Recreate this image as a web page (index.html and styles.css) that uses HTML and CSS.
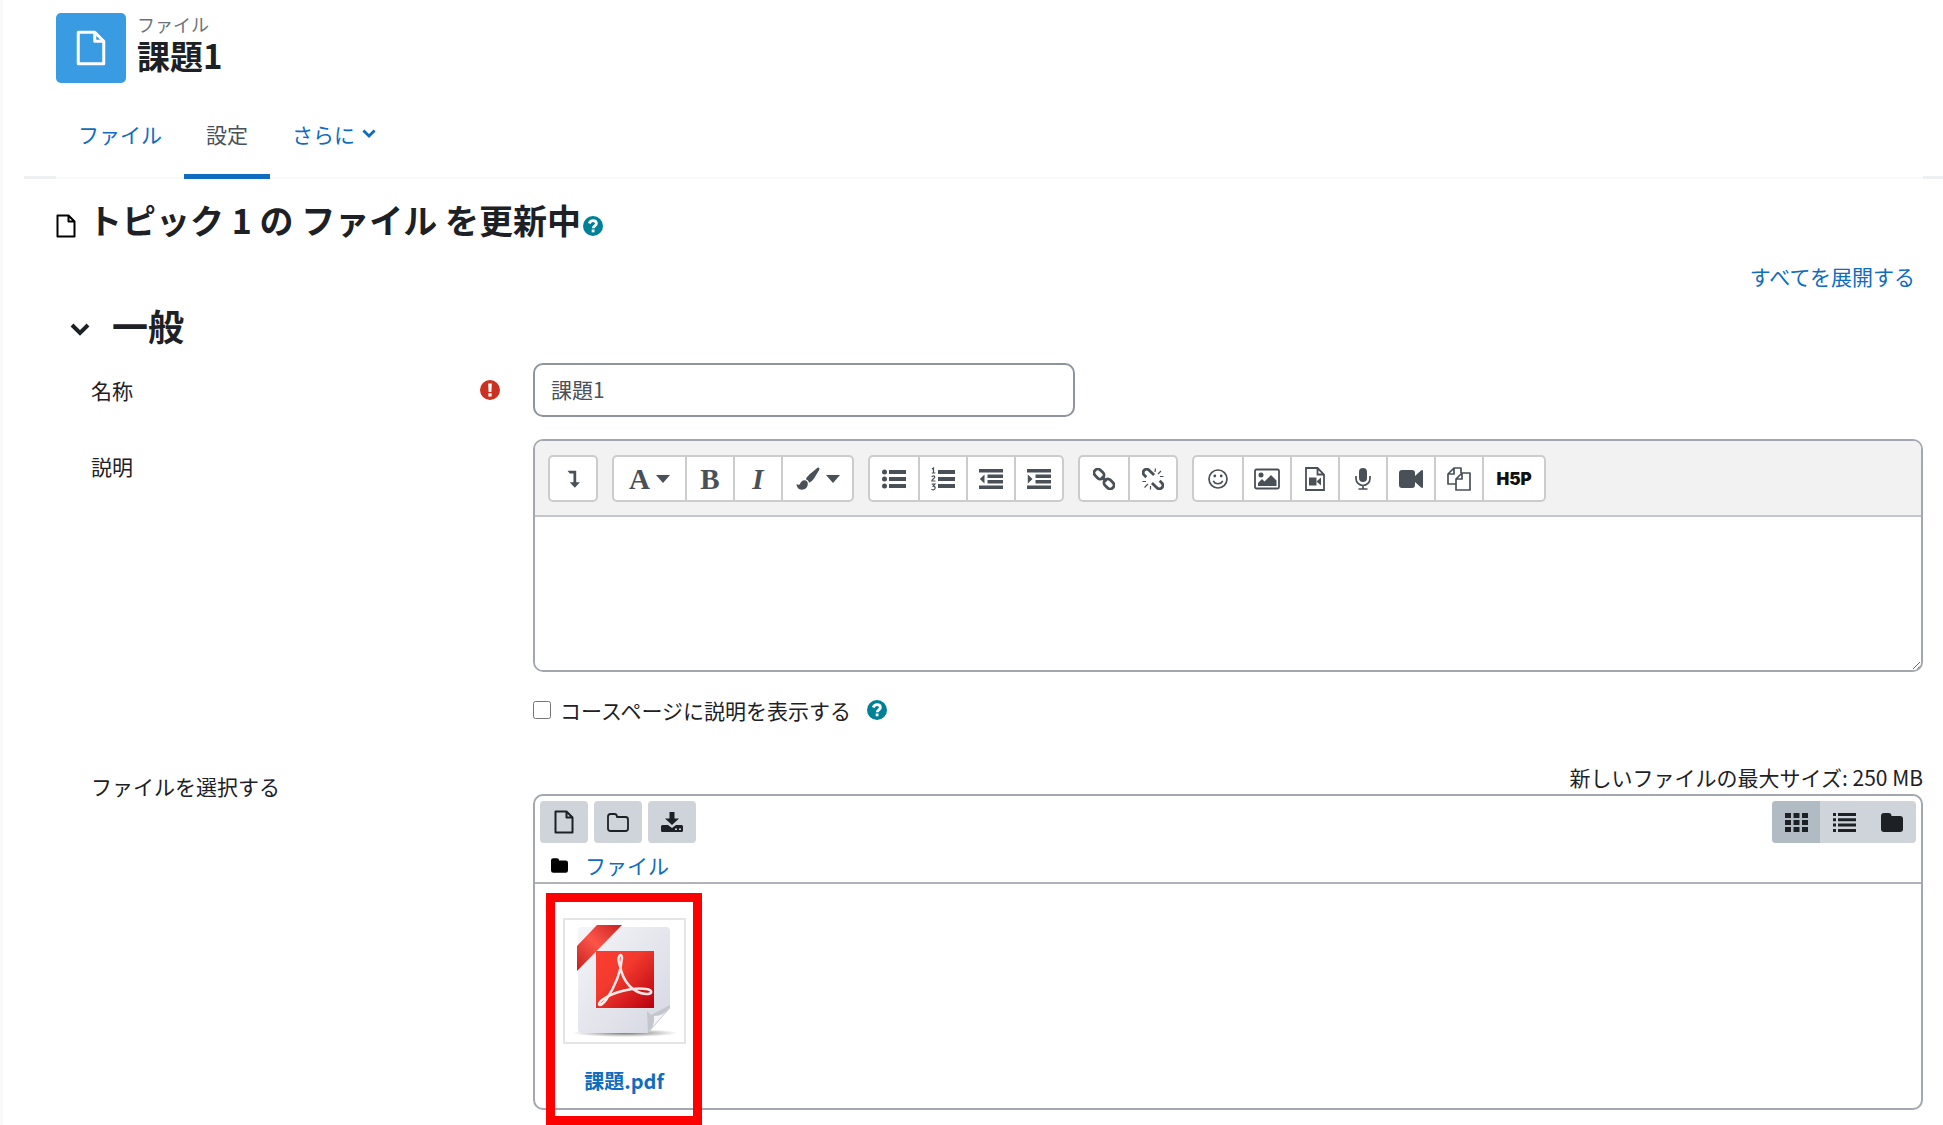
FILE: index.html
```html
<!DOCTYPE html>
<html lang="ja">
<head>
<meta charset="utf-8">
<title>課題1</title>
<link rel="stylesheet" href="styles.css">
</head>
<body>
<svg class="sprite" aria-hidden="true">
  <symbol id="i-file" viewBox="0 0 20 24"><path fill="none" stroke="currentColor" stroke-width="2" stroke-linejoin="round" d="M1.500 1.500h11l6 6v15h-17zM12.500 1.500v6h6"/></symbol>
  <symbol id="i-chevron" viewBox="0 0 20 14"><path fill="none" stroke="currentColor" stroke-width="4" d="M2 2l8 8 8-8"/></symbol>
  <symbol id="i-help" viewBox="0 0 20 20"><circle cx="10" cy="10" r="10" fill="currentColor"/><path fill="none" stroke="#fff" stroke-width="2.800" d="M6.300 7.400C7 5.500 8.300 4.600 10 4.600c2 0 3.400 1.200 3.400 2.900 0 2.300-3.200 2.300-3.200 4.700"/><path fill="#fff" d="M8.700 13.500h2.800v2.800H8.700z"/></symbol>
  <symbol id="i-required" viewBox="0 0 20 20"><circle cx="10" cy="10" r="10" fill="currentColor"/><path fill="#fff" d="M8.200 3.500h3.600l-.4 8.500H8.600zM8.400 13.300h3.200v3.200H8.400z"/></symbol>
  <symbol id="i-toggle" viewBox="0 0 24 24"><path fill="currentColor" d="M6 3h9.500v12.500h4L14 21.500l-5.500-6h4V6H8.500z"/></symbol>
  <symbol id="i-caret" viewBox="0 0 14 8"><path fill="currentColor" d="M0 0h14L7 8z"/></symbol>
  <symbol id="i-brush" viewBox="0 0 24 24"><path fill="currentColor" d="M21.500.7c1.400-.6 2.400.6 1.800 2L18 11.500c-1.200 2-3 3.200-5 4.200-.3-1.800-1.500-3-3.200-3.500 1-1.800 2-3 3.600-4.600zM8.500 13.300c2 .1 3.500 1.600 3.300 3.700-.2 3.500-2.500 5.700-6 5.700-3.200 0-5-2.200-5.300-5.700 1.200.8 2.500 1.200 3.300.2 1-2 2.500-4 4.700-3.900z"/></symbol>
  <symbol id="i-ul" viewBox="0 0 24 20"><path fill="currentColor" d="M7 1h17v4H7zM7 8h17v4H7zM7 15h17v4H7z"/><circle cx="2.500" cy="3" r="2.500" fill="currentColor"/><circle cx="2.500" cy="10" r="2.500" fill="currentColor"/><circle cx="2.500" cy="17" r="2.500" fill="currentColor"/></symbol>
  <symbol id="i-ol" viewBox="0 0 24 24"><path fill="currentColor" d="M7 3h17v4H7zM7 10h17v4H7zM7 17h17v4H7z"/><path fill="none" stroke="currentColor" stroke-width="1.200" d="M1 2l1.500-1v5M.8 6h3.600M.8 10c.5-1.500 3-1.500 3 0 0 1.500-3 2-3 4h3.700M.8 17.200h3.100l-1.700 2c3 0 2.300 3.600 0 3.600-.8 0-1.300-.3-1.700-.7"/></symbol>
  <symbol id="i-outdent" viewBox="0 0 24 20"><path fill="currentColor" d="M0 0h24v3.500H0zM8.500 5.500H24V9H8.500zM8.500 11H24v3.500H8.500zM0 16.500h24V20H0zM5.500 5.500v9L.8 10z"/></symbol>
  <symbol id="i-indent" viewBox="0 0 24 20"><path fill="currentColor" d="M0 0h24v3.500H0zM8.500 5.500H24V9H8.500zM8.500 11H24v3.500H8.500zM0 16.500h24V20H0zM.8 5.500v9L5.500 10z"/></symbol>
  <symbol id="i-link" viewBox="0 0 22 22"><g fill="none" stroke="currentColor" stroke-width="2.800" transform="rotate(45 11 11)"><rect x="-1.500" y="7.200" width="11" height="7.600" rx="3.800"/><rect x="12.500" y="7.200" width="11" height="7.600" rx="3.800"/><path d="M7.500 11h7"/></g></symbol>
  <symbol id="i-unlink" viewBox="0 0 22 22"><g fill="none" stroke="currentColor" stroke-width="2.800" transform="rotate(45 11 11)"><path d="M9 7.500H2a3.500 3.500 0 0 0 0 7h3M13 14.500h7a3.500 3.500 0 0 0 0-7h-3"/></g><path fill="none" stroke="currentColor" stroke-width="1.200" d="M13 4l.5-3.500M16 6l3-3M18 8.500h3.500M8.500 18v3.500M6 16l-3.500 3.500M4 13.500H.5"/></symbol>
  <symbol id="i-smile" viewBox="0 0 20 20"><circle cx="10" cy="10" r="9" fill="none" stroke="currentColor" stroke-width="1.700"/><circle cx="6.800" cy="7" r="1.400" fill="currentColor"/><circle cx="13.200" cy="7" r="1.400" fill="currentColor"/><path fill="none" stroke="currentColor" stroke-width="1.500" d="M5.300 11.800c1.400 4 8 4 9.400 0"/></symbol>
  <symbol id="i-image" viewBox="0 0 26 22"><rect x="1" y="1.500" width="24" height="19" rx="1.500" fill="none" stroke="currentColor" stroke-width="1.800"/><circle cx="7" cy="7" r="2.500" fill="currentColor"/><path fill="currentColor" d="M4 18v-3l4-4 2.500 2.500L17 7l5.500 5.500V18z"/></symbol>
  <symbol id="i-filevideo" viewBox="0 0 20 24"><path fill="none" stroke="currentColor" stroke-width="1.800" d="M1 1h11.500L19 7.500V23H1zM12.500 1v6.500H19"/><path fill="currentColor" d="M4 10.500h7.500v8H4zM12 14l4-3.500v8L12 15z"/></symbol>
  <symbol id="i-mic" viewBox="0 0 16 22"><rect x="4" width="8" height="14" rx="4" fill="currentColor"/><path fill="none" stroke="currentColor" stroke-width="1.700" d="M1 8v2.500a7 7 0 0 0 14 0V8M8 17.500V21M3.500 21h9"/></symbol>
  <symbol id="i-video" viewBox="0 0 24 18"><path fill="currentColor" d="M3 0h10q3 0 3 3v3l6-5.500q2-1 2 .5v16q0 1.500-2 .5L16 12v3q0 3-3 3H3q-3 0-3-3V3q0-3 3-3z"/></symbol>
  <symbol id="i-copy" viewBox="0 0 24 24"><path fill="none" stroke="currentColor" stroke-width="1.700" stroke-linejoin="round" d="M9 17H1V7l6-6h7v5M7 1v6H1M9 23V12l6-6h8v17zM15 6v6H9"/></symbol>
  <symbol id="i-folder-o" viewBox="0 0 22 19"><path fill="none" stroke="currentColor" stroke-width="1.800" stroke-linejoin="round" d="M1 3.500Q1 1 3.500 1h4Q10 1 10 4h8.500Q21 4 21 6.500v9q0 2.500-2.500 2.500h-15Q1 18 1 15.500z"/></symbol>
  <symbol id="i-folder" viewBox="0 0 22 19"><path fill="currentColor" d="M0 3q0-3 3-3h4.500q3 0 3 3H19q3 0 3 3v10q0 3-3 3H3q-3 0-3-3z"/></symbol>
  <symbol id="i-download" viewBox="0 0 22 20"><path fill="currentColor" d="M8.500 0h5v6.500H18L11 13 4 6.500h4.500z"/><path fill="currentColor" fill-rule="evenodd" d="M1.500 13H7l4 3 4-3h5.500q1.500 0 1.500 1.500v4q0 1.500-1.500 1.500h-19Q0 20 0 18.500v-4Q0 13 1.500 13zM14 16.500v1.500h2v-1.500zM18 16.500v1.500h2v-1.500z"/></symbol>
  <symbol id="i-grid" viewBox="0 0 23 19"><path fill="currentColor" d="M0 0h6v5H0zM8.500 0h6v5h-6zM17 0h6v5h-6zM0 7h6v5H0zM8.500 7h6v5h-6zM17 7h6v5h-6zM0 14h6v5H0zM8.500 14h6v5h-6zM17 14h6v5h-6z"/></symbol>
  <symbol id="i-list" viewBox="0 0 23 19"><path fill="currentColor" d="M0 0h3v3H0zM5 0h18v3H5zM0 5.300h3v3H0zM5 5.300h18v3H5zM0 10.600h3v3H0zM5 10.600h18v3H5zM0 16h3v3H0zM5 16h18v3H5z"/></symbol>
</svg>

<main class="page">
  <header class="activity">
    <span class="activity-icon"><svg width="30" height="36"><use href="#i-file"/></svg></span>
    <div>
      <div class="activity-type">ファイル</div>
      <h1>課題1</h1>
    </div>
  </header>

  <nav class="tabs">
    <ul>
      <li><a href="#">ファイル</a></li>
      <li><a href="#" class="active" aria-current="page">設定</a></li>
      <li><a href="#">さらに <svg width="14" height="10"><use href="#i-chevron"/></svg></a></li>
    </ul>
  </nav>

  <div class="heading">
    <svg width="20" height="24"><use href="#i-file"/></svg>
    <h2>トピック 1 の ファイル を更新中</h2>
    <button class="help" type="button" aria-label="ヘルプ"><svg width="20" height="20"><use href="#i-help"/></svg></button>
  </div>

  <div class="expand"><a href="#">すべてを展開する</a></div>

  <form>
    <h3><button type="button"><svg width="20" height="14"><use href="#i-chevron"/></svg>一般</button></h3>

    <div class="row">
      <div class="label single"><label for="name">名称</label><svg class="required" width="20" height="20"><use href="#i-required"/></svg></div>
      <input class="text" id="name" type="text" value="課題1">
    </div>

    <div class="row">
      <div class="label single"><label for="intro">説明</label></div>
      <div class="field">
        <div class="editor">
          <div class="toolbar">
            <div class="group"><button type="button" aria-label="切り替え"><svg width="22" height="22"><use href="#i-toggle"/></svg></button></div>
            <div class="group">
              <button type="button" class="wide"><span class="glyph">A</span><svg width="14" height="8"><use href="#i-caret"/></svg></button>
              <button type="button"><span class="glyph">B</span></button>
              <button type="button"><span class="glyph italic">I</span></button>
              <button type="button" class="wide" aria-label="色"><svg width="24" height="24"><use href="#i-brush"/></svg><svg width="14" height="8"><use href="#i-caret"/></svg></button>
            </div>
            <div class="group">
              <button type="button" aria-label="箇条書き"><svg width="24" height="20"><use href="#i-ul"/></svg></button>
              <button type="button" aria-label="番号付き"><svg width="24" height="24"><use href="#i-ol"/></svg></button>
              <button type="button" aria-label="字下げ解除"><svg width="24" height="20"><use href="#i-outdent"/></svg></button>
              <button type="button" aria-label="字下げ"><svg width="24" height="20"><use href="#i-indent"/></svg></button>
            </div>
            <div class="group">
              <button type="button" aria-label="リンク"><svg width="22" height="22"><use href="#i-link"/></svg></button>
              <button type="button" aria-label="リンク解除"><svg width="22" height="22"><use href="#i-unlink"/></svg></button>
            </div>
            <div class="group">
              <button type="button" aria-label="絵文字"><svg width="20" height="20"><use href="#i-smile"/></svg></button>
              <button type="button" aria-label="画像"><svg width="26" height="22"><use href="#i-image"/></svg></button>
              <button type="button" aria-label="メディア"><svg width="20" height="24"><use href="#i-filevideo"/></svg></button>
              <button type="button" aria-label="録音"><svg width="16" height="22"><use href="#i-mic"/></svg></button>
              <button type="button" aria-label="録画"><svg width="24" height="18"><use href="#i-video"/></svg></button>
              <button type="button" aria-label="ファイル管理"><svg width="24" height="24"><use href="#i-copy"/></svg></button>
              <button type="button" class="h5p">H5P</button>
            </div>
          </div>
          <textarea id="intro"></textarea>
        </div>
        <div class="check">
          <input type="checkbox" id="show"><label for="show">コースページに説明を表示する</label>
          <button class="help" type="button" aria-label="ヘルプ"><svg width="20" height="20"><use href="#i-help"/></svg></button>
        </div>
      </div>
    </div>

    <div class="row files">
      <div class="label">ファイルを選択する</div>
      <div class="field">
        <div class="maxsize">新しいファイルの最大サイズ: 250 MB</div>
        <div class="manager">
          <div class="manager-bar">
            <div class="actions">
              <button type="button" aria-label="追加"><svg width="20" height="24"><use href="#i-file"/></svg></button>
              <button type="button" aria-label="フォルダ作成"><svg width="22" height="19"><use href="#i-folder-o"/></svg></button>
              <button type="button" aria-label="ダウンロード"><svg width="22" height="20"><use href="#i-download"/></svg></button>
            </div>
            <div class="views">
              <button type="button" class="on" aria-label="アイコン"><svg width="23" height="19"><use href="#i-grid"/></svg></button>
              <button type="button" aria-label="リスト"><svg width="23" height="19"><use href="#i-list"/></svg></button>
              <button type="button" aria-label="ツリー"><svg width="22" height="19"><use href="#i-folder"/></svg></button>
            </div>
          </div>
          <div class="path"><svg width="17" height="15"><use href="#i-folder"/></svg><a href="#">ファイル</a></div>
          <div class="content">
            <a class="file" href="#">
              <span class="thumb">
                <svg width="118" height="122" viewBox="0 0 118 122">
                  <defs>
                    <linearGradient id="paper" x1="0" y1="0" x2="1" y2="1"><stop offset="0" stop-color="#f5f5f8"/><stop offset="1" stop-color="#d5d7e2"/></linearGradient>
                    <linearGradient id="red" x1="0" y1="0" x2="1" y2="1"><stop offset="0" stop-color="#fd3d31"/><stop offset=".4" stop-color="#f23a2e"/><stop offset="1" stop-color="#b8000f"/></linearGradient>
                    <linearGradient id="ribbon" x1="0" y1="1" x2="1" y2="0"><stop offset="0" stop-color="#c41f1d"/><stop offset=".5" stop-color="#fb5549"/><stop offset="1" stop-color="#c9221f"/></linearGradient>
                    <radialGradient id="shade"><stop offset="0" stop-color="#777"/><stop offset="1" stop-color="#fff"/></radialGradient>
                  </defs>
                  <ellipse cx="60" cy="113" rx="53" ry="4" fill="url(#shade)"/>
                  <path fill="url(#paper)" d="M17 7h84q4 0 4 4v77l-22 25H17q-4 0-4-4V11q0-4 4-4z"/>
                  <path fill="#c4c6cf" d="M82 91l4 4 19-10v3l-22 25z"/>
                  <path fill="#f4f4f8" d="M84 111q6-5 5-15 10 0 16-9z"/>
                  <path fill="url(#ribbon)" d="M32 5h25L12 51V26z"/>
                  <path fill="url(#red)" d="M31 31h58v57H31z"/>
                  <path fill="none" stroke="#fce9e8" stroke-width="2.500" stroke-linecap="round" stroke-linejoin="round" d="M55 46c-4-11 2-14 2-8-1 15-8 30-16 42-6 8-10 5-4 0 11-8 31-13 44-11 7 1 7 5 0 5-13-1-23-12-26-28z"/>
                </svg>
              </span>
              <span class="filename">課題.pdf</span>
            </a>
          </div>
        </div>
      </div>
    </div>
  </form>
</main>
</body>
</html>
```
FILE: styles.css
```css
* { box-sizing: border-box; }

body {
  margin: 0;
  background: #fff;
  color: #1d2125;
  font-family: "Noto Sans CJK JP", sans-serif;
  font-size: 21px;
  line-height: 30px;
}

svg { display: block; flex: none; }
.sprite { position: absolute; width: 0; height: 0; }
a { color: #0f6cbf; text-decoration: none; }
h1, h2, h3 { margin: 0; font-weight: 700; }
button, input, textarea { font: inherit; color: inherit; }
button { display: flex; align-items: center; justify-content: center; padding: 0; border: 0; background: none; }

.page { min-height: 100vh; border-left: 3px solid #f9f9fa; padding: 13px 20px 14px 53px; }

.activity { display: flex; gap: 11px; }
.activity-icon {
  display: flex; align-items: center; justify-content: center;
  width: 70px; height: 70px; border-radius: 5px;
  background: #399be2; color: #fff;
}
.activity-type { color: #6a737b; font-size: 18px; line-height: 22px; }
h1 { font-size: 33px; line-height: 40px; }

.tabs { margin: 13px -20px 0 -32px; padding: 0 20px 0 32px; border-bottom: 3px solid #edeff1; }
.tabs ul { display: flex; margin: 0 0 -3px; padding: 0; list-style: none; background: #fff; border-bottom: 2px solid #f8f9fa; }
.tabs a { display: flex; align-items: center; gap: 7px; height: 83px; margin-bottom: -2px; padding: 0 22px 2px; border-bottom: 5px solid transparent; }
.tabs a.active { color: #495057; border-color: #0f6cbf; }

.heading { display: flex; align-items: center; margin-top: 19px; }
.heading > svg { margin: 12px 12px 0 0; color: #000; }
h2 { font-size: 34px; line-height: 44px; }
.help { color: #008196; }
.heading .help { margin: 12px 0 0 2px; }

.expand { margin: 19px 8px 0 0; text-align: right; }

h3 { margin: 12px 0 16px 14px; font-size: 36px; line-height: 44px; }
h3 button { gap: 22px; }
h3 svg { margin-top: 10px; }

.row { display: grid; grid-template-columns: 442px 1fr; margin: 0 0 22px 35px; }
.label { display: flex; justify-content: space-between; align-items: center; height: 30px; padding-right: 33px; }
.label.single { height: 54px; }
.required { color: #ca3120; }
.text { width: 39%; height: 54px; padding: 0 16px 2px; border: 2px solid #8f959e; border-radius: 10px; background: #fff; color: #495057; }

.editor { display: flex; flex-direction: column; overflow: hidden; border: 2px solid #a3a8b0; border-radius: 10px; }
.toolbar { display: flex; flex-wrap: wrap; gap: 14px; padding: 14px 13px 13px; border-bottom: 2px solid #c3c7cd; background: #f2f2f2; }
.group { display: flex; border: 2px solid #ccc; border-radius: 5px; background: #fff; color: #495057; }
.group button { width: 48px; height: 43px; gap: 6px; }
.group button + button { border-left: 2px solid #ccc; }
.group:first-child button { width: 46px; }
.group .wide { width: 71px; }
.group .h5p { width: 62px; color: #111; font-family: Inter, sans-serif; font-size: 17px; font-weight: 900; }
.glyph { font-family: "Liberation Serif", serif; font-size: 29px; font-weight: 700; }
.italic { font-style: italic; }
textarea { height: 153px; padding: 10px; border: 0; outline: 0; resize: vertical; background: #fff; }

.check { display: flex; align-items: center; margin-top: 23px; }
.check input { width: 18px; height: 18px; margin: 0 9px 0 0; }
.check .help { margin-left: 16px; }

.files { margin: 37px 0 0 35px; }
.files .label { margin-top: 9px; }
.maxsize { text-align: right; margin-bottom: 2px; }
.manager { border: 2px solid #a3a8b0; border-radius: 10px; }
.manager-bar { display: flex; justify-content: space-between; padding: 5px; }
.actions { display: flex; gap: 6px; }
.actions button { width: 48px; height: 42px; border-radius: 4px; background: #ced4da; }
.views { display: flex; overflow: hidden; border-radius: 4px; background: #ced4da; }
.views button { width: 48px; height: 42px; }
.views .on { background: #b1bbc4; }
.path { display: flex; align-items: center; gap: 17px; height: 34px; padding-left: 16px; }
.path svg { color: #000; }
.content { border-top: 2px solid #b0b4ba; height: 226px; padding: 9px 11px 0; }
.file { display: flex; flex-direction: column; align-items: center; width: 156px; height: 232px; padding-top: 16px; border: 9px solid #f00; font-size: 20px; font-weight: 700; }
.thumb { display: flex; width: 123px; height: 126px; border: 2px solid #e4e5e6; justify-content: center; }
.filename { margin-top: 22px; }
```
